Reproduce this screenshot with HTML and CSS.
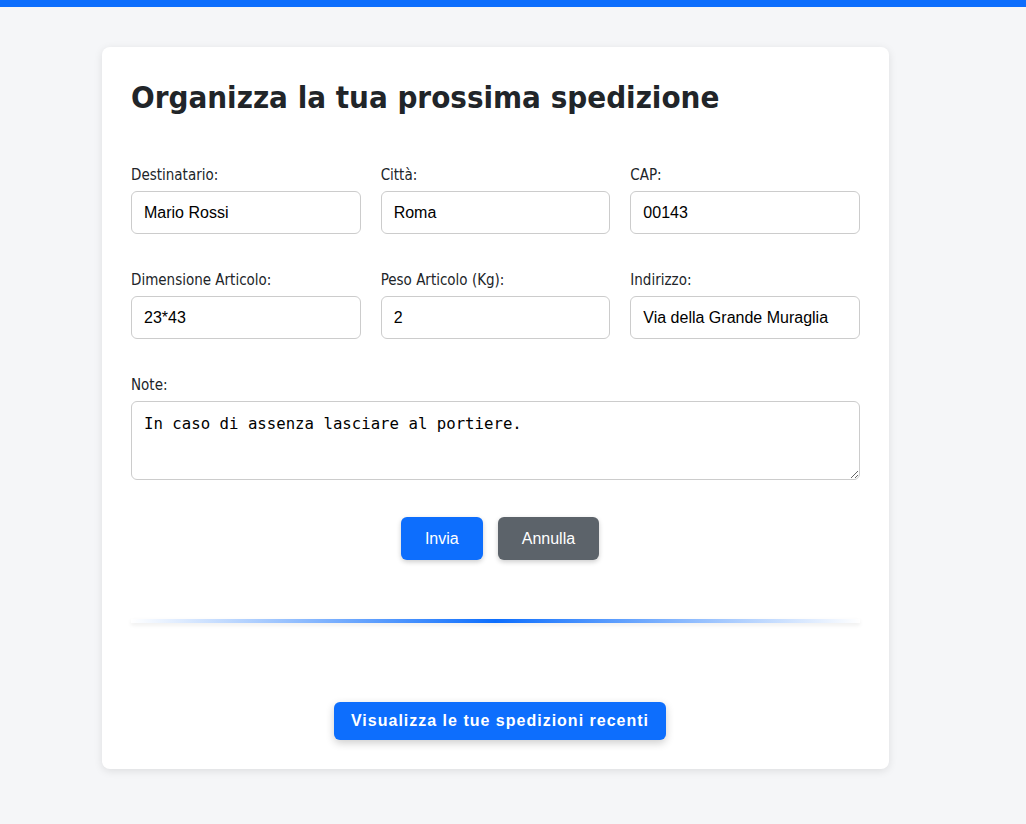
FILE: index.html
```html
<!DOCTYPE html>
<html lang="it">
<head>
<meta charset="utf-8">
<title>Spedizione</title>
<link rel="stylesheet" href="styles.css">
</head>
<body>
<div class="topbar"></div>
<main class="card">
  <h1 class="title">Organizza la tua prossima spedizione</h1>
  <form class="form">
    <div class="grid">
      <div class="field">
        <label class="label">Destinatario:</label>
        <input class="input" type="text" value="Mario Rossi">
      </div>
      <div class="field">
        <label class="label">Città:</label>
        <input class="input" type="text" value="Roma">
      </div>
      <div class="field">
        <label class="label">CAP:</label>
        <input class="input" type="text" value="00143">
      </div>
      <div class="field">
        <label class="label">Dimensione Articolo:</label>
        <input class="input" type="text" value="23*43">
      </div>
      <div class="field">
        <label class="label">Peso Articolo (Kg):</label>
        <input class="input" type="text" value="2">
      </div>
      <div class="field">
        <label class="label">Indirizzo:</label>
        <input class="input" type="text" value="Via della Grande Muraglia">
      </div>
    </div>
    <div class="field note-field">
      <label class="label">Note:</label>
      <textarea class="textarea">In caso di assenza lasciare al portiere.</textarea>
    </div>
    <div class="actions">
      <button type="button" class="btn btn-primary">Invia</button>
      <button type="button" class="btn btn-secondary">Annulla</button>
    </div>
  </form>
  <div class="divider"></div>
  <div class="recent">
    <button type="button" class="btn-recent">Visualizza le tue spedizioni recenti</button>
  </div>
</main>
</body>
</html>
```

FILE: styles.css
```css
* { box-sizing: border-box; }
html, body { margin: 0; padding: 0; }
body {
  background: #f5f6f8;
  font-family: "DejaVu Sans", sans-serif;
  color: #212529;
  height: 824px;
}
.topbar {
  height: 7px;
  background: #0d6efd;
}
.card {
  width: 787px;
  margin: 40px 0 0 102px;
  background: #fff;
  border-radius: 8px;
  box-shadow: 0 2px 8px rgba(0, 0, 0, 0.1);
  padding: 30px 29px 29px;
}
.title {
  margin: 0 0 49px;
  font-family: "DejaVu Sans", sans-serif;
  font-stretch: condensed;
  font-size: 31px;
  line-height: 40px;
  font-weight: bold;
  color: #212529;
}
.grid {
  display: grid;
  grid-template-columns: repeat(3, minmax(0, 1fr));
  column-gap: 20px;
  row-gap: 37px;
}
.field { display: flex; flex-direction: column; min-width: 0; }
.label {
  font-family: "DejaVu Sans", sans-serif;
  font-stretch: condensed;
  font-size: 15px;
  line-height: 18px;
  margin-bottom: 7px;
  color: #212529;
}
.input {
  width: 100%;
  height: 43px;
  border: 1px solid #ccc;
  border-radius: 6px;
  padding: 0 12px;
  font-family: "Liberation Sans", Arial, sans-serif;
  font-size: 16px;
  color: #000;
}
.note-field { margin-top: 37px; }
.textarea {
  width: 100%;
  height: 79px;
  border: 1px solid #ccc;
  border-radius: 6px;
  padding: 12px;
  font-family: "DejaVu Sans Mono", monospace;
  font-size: 15.7px;
  color: #000;
  resize: vertical;
}
.actions {
  display: flex;
  justify-content: center;
  gap: 15px;
  margin-top: 37px;
  padding-left: 9px;
}
.btn {
  height: 43px;
  border: none;
  border-radius: 6px;
  padding: 0 24px;
  font-family: "Liberation Sans", Arial, sans-serif;
  font-size: 16px;
  color: #fff;
  box-shadow: 0 2px 5px rgba(0, 0, 0, 0.2);
}
.btn-primary { background: #0d6efd; }
.btn-secondary { background: #5c636a; }
.divider {
  height: 4px;
  margin-top: 59px;
  background: linear-gradient(to right, rgba(13,110,253,0), #0d6efd 50%, rgba(13,110,253,0));
  box-shadow: 0 2px 4px rgba(0, 0, 0, 0.08);
}
.recent {
  display: flex;
  justify-content: center;
  margin-top: 79px;
  padding-left: 9px;
}
.btn-recent {
  height: 38px;
  border: none;
  border-radius: 6px;
  padding: 0 17px;
  background: #0d6efd;
  color: #fff;
  font-family: "Liberation Sans", Arial, sans-serif;
  font-weight: bold;
  font-size: 16px;
  letter-spacing: 1px;
  box-shadow: 0 3px 8px rgba(0, 0, 0, 0.2);
}
```
